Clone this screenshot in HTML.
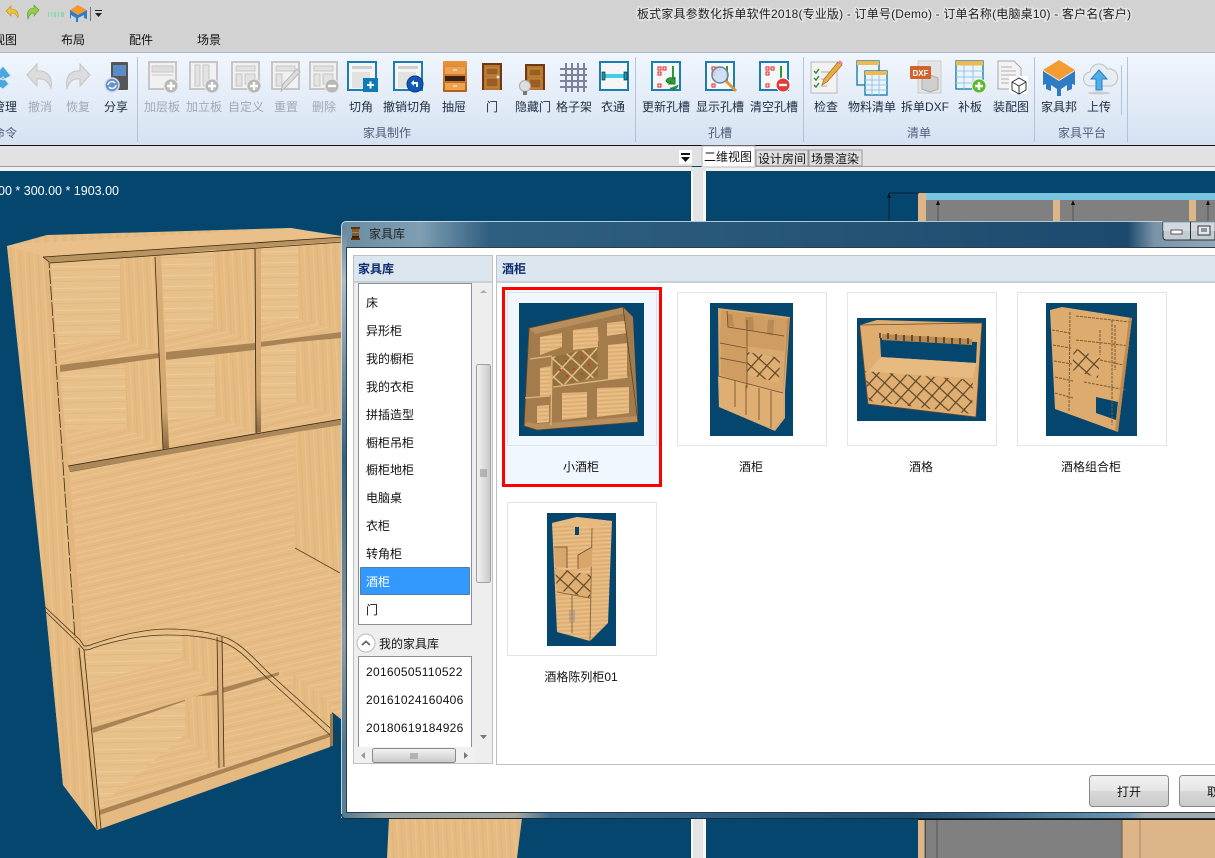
<!DOCTYPE html>
<html lang="zh"><head><meta charset="utf-8"><title>家具库</title>
<style>
html,body{margin:0;padding:0;background:#05466f;width:1215px;height:858px;overflow:hidden}
svg{display:block;position:absolute;left:0;top:0}
text{font-family:"Liberation Sans","Noto Sans CJK SC",sans-serif;font-size:12px;fill:#111}
.c{text-anchor:middle}
.r{fill:#1e2c40}.d{fill:#a0a8b2}.g{fill:#4e5d7c}
.h{font-weight:bold;fill:#0c2a6e}
</style></head><body>
<svg width="1215" height="858" viewBox="0 0 1215 858" xmlns="http://www.w3.org/2000/svg">
<defs>
<pattern id="wh" width="90" height="13" patternUnits="userSpaceOnUse" patternTransform="rotate(-13)">
<rect width="90" height="13" fill="#e6bc84"/><rect y="2" width="90" height="1" fill="#ebc48f"/><rect y="6" width="90" height="1" fill="#e1b57c"/><rect y="10" width="90" height="1" fill="#ebc592"/></pattern>
<pattern id="wb" width="90" height="11" patternUnits="userSpaceOnUse" patternTransform="rotate(-1)">
<rect width="90" height="11" fill="#e8c08a"/><rect y="3" width="90" height="1" fill="#eecb9a"/><rect y="7" width="90" height="1" fill="#e3b880"/></pattern>
<pattern id="wv" width="9" height="60" patternUnits="userSpaceOnUse" patternTransform="rotate(-3)">
<rect width="9" height="60" fill="#e5bb82"/><rect x="2" width="1" height="60" fill="#eac48f"/><rect x="6" width="1" height="60" fill="#e0b47b"/></pattern>
<pattern id="lat" width="13" height="13" patternUnits="userSpaceOnUse" patternTransform="rotate(42)">
<rect width="13" height="13" fill="#94703f"/><rect width="13" height="1.500" fill="#e4bc86"/><rect width="1.500" height="13" fill="#e4bc86"/></pattern>
<pattern id="lat2" width="11" height="11" patternUnits="userSpaceOnUse" patternTransform="rotate(42)">
<rect width="11" height="11" fill="#dfae72"/><rect width="11" height="1.200" fill="#5f4526"/><rect width="1.200" height="11" fill="#5f4526"/></pattern>
<pattern id="tw" width="40" height="4" patternUnits="userSpaceOnUse" patternTransform="rotate(-3)">
<rect width="40" height="4" fill="#e4b67c"/><rect y="1" width="40" height="1" fill="#eac28c"/><rect y="3" width="40" height="1" fill="#dcab70"/></pattern>
<linearGradient id="rib" x1="0" y1="0" x2="0" y2="1"><stop offset="0" stop-color="#f1f6fd"/><stop offset="1" stop-color="#d5e2f2"/></linearGradient>
<linearGradient id="dt" x1="341" y1="0" x2="1215" y2="0" gradientUnits="userSpaceOnUse"><stop offset="0" stop-color="#6a8ba0"/><stop offset=".09" stop-color="#7f9eb3"/><stop offset=".17" stop-color="#2f5f80"/><stop offset=".9" stop-color="#1c4a6e"/><stop offset=".93" stop-color="#7a93a8"/><stop offset="1" stop-color="#94a8b8"/></linearGradient>
<linearGradient id="dl" x1="0" y1="221" x2="0" y2="819" gradientUnits="userSpaceOnUse"><stop offset="0" stop-color="#5f8196"/><stop offset=".1" stop-color="#a9bcc9"/><stop offset=".4" stop-color="#35627f"/><stop offset=".7" stop-color="#8f9a9f"/><stop offset=".88" stop-color="#4f7894"/><stop offset="1" stop-color="#5a7f98"/></linearGradient>
<linearGradient id="db" x1="341" y1="0" x2="1215" y2="0" gradientUnits="userSpaceOnUse"><stop offset="0" stop-color="#4f7894"/><stop offset=".05" stop-color="#9aa3a3"/><stop offset=".2" stop-color="#a8a8a0"/><stop offset=".24" stop-color="#3c6d8f"/><stop offset=".65" stop-color="#1f4f75"/><stop offset=".9" stop-color="#6b95b3"/><stop offset=".92" stop-color="#a3aaae"/><stop offset="1" stop-color="#a3aaae"/></linearGradient>
<linearGradient id="sb" x1="0" y1="0" x2="1" y2="0"><stop offset="0" stop-color="#f4f4f4"/><stop offset="1" stop-color="#c8c8c8"/></linearGradient>
<linearGradient id="sh" x1="0" y1="0" x2="0" y2="1"><stop offset="0" stop-color="#f4f4f4"/><stop offset="1" stop-color="#c8c8c8"/></linearGradient>
<linearGradient id="btn" x1="0" y1="0" x2="0" y2="1"><stop offset="0" stop-color="#f2f2f2"/><stop offset=".49" stop-color="#e6e6e6"/><stop offset=".5" stop-color="#d8d8d8"/><stop offset="1" stop-color="#c9c9c9"/></linearGradient>
<linearGradient id="drw" x1="0" y1="0" x2="0" y2="1"><stop offset="0" stop-color="#e8963c"/><stop offset="1" stop-color="#b0601c"/></linearGradient>
<linearGradient id="dv" x1="0" y1="0" x2="0" y2="1"><stop offset="0" stop-color="#dcb078"/><stop offset=".8" stop-color="#d2a66e"/><stop offset="1" stop-color="#8a6a42"/></linearGradient>
<g id="pG"><rect x="1" y="1" width="27" height="27" fill="#f1f1f1" stroke="#c6c6c6" stroke-width="2"/></g>
<g id="pB"><rect x="1" y="1" width="28" height="28" fill="#f5f5f5" stroke="#1a7fb0" stroke-width="2"/><path d="M5 5h20v3H5z" fill="#cfcfcf"/></g>
<g id="plus"><circle cx="23" cy="25" r="7" fill="#b8b8b8" stroke="#e8e8e8"/><path d="M19 25h8M23 21v8" stroke="#fff" stroke-width="2.4"/></g>
<g id="hole"><rect x="1" y="1" width="28" height="28" fill="#f6f6f6" stroke="#1a7fb0" stroke-width="2"/><path d="M7 6h3v3H7zM12 6h3v3h-3zM7 11h3v3H7zM7 23h3v3H7z" fill="none" stroke="#d22"/><path d="M21 5h2v16h-2z" fill="#2c9a3c"/></g>
</defs>

<!-- window chrome -->
<rect width="1215" height="52" fill="#d2d2d2"/>
<rect y="52" width="1215" height="1" fill="#a9b8cd"/>
<rect y="53" width="1215" height="92" fill="url(#rib)"/>
<rect y="145" width="1215" height="1" fill="#111"/>
<rect y="146" width="1215" height="20" fill="#e2e2e2"/>
<rect y="166" width="692" height="1" fill="#9c9c9c"/>
<rect y="167" width="1215" height="4" fill="#f0f0f0"/>
<rect x="705" y="166" width="510" height="1" fill="#9c9c9c"/>

<!-- quick access -->
<path d="M6 11l5-5v3c5 0 8 3 7 9-1-3-3-5-7-5v3z" fill="#eec23c" stroke="#b89020" stroke-width=".6"/>
<path d="M39 10l-5-5v3c-5 0-8 4-6 11 1-4 3-6 6-6v3z" fill="#93cc48" stroke="#5f9a2a" stroke-width=".6"/>
<path d="M48 12h16v5H48z" fill="#9cd0b4"/><path d="M50 12v5M53 12v5M57 12v5M60 12v5" stroke="#e4e4e4"/>
<path d="M78 5l9 5-9 5-8-5z" fill="#f49a2c"/><path d="M70 10l8 5 9-5v9l-3-1v-3l-6 3v4l-2 0v-4l-5-3v3l-1 1z" fill="#2c7ec6"/>
<rect x="90" y="7" width="1" height="14" fill="#777"/>
<path d="M95 10h7v1h-7zM95 13h7l-3.500 4z" fill="#222"/>
<text x="637" y="18" textLength="494" lengthAdjust="spacing" style="paint-order:stroke;stroke:#e4e4e4;stroke-width:3px;fill:#222">板式家具参数化拆单软件2018(专业版) - 订单号(Demo) - 订单名称(电脑桌10) - 客户名(客户)</text>
<text x="-7" y="44">视图</text><text x="61" y="44">布局</text><text x="129" y="44">配件</text><text x="197" y="44">场景</text>

<!-- ribbon separators -->
<g fill="#b4c4d8"><rect x="137" y="57" width="1" height="85"/><rect x="635" y="57" width="1" height="85"/><rect x="803" y="57" width="1" height="85"/><rect x="1034" y="57" width="1" height="85"/><rect x="1127" y="57" width="1" height="85"/><rect x="1121" y="65" width="1" height="50"/></g>

<!-- ribbon icons -->
<path d="M-6 76L3 66l8 10-8 4zM-6 84l9-7 6 7-6 5z" fill="#4aa8de" stroke="#d8eefa"/>
<g fill="#dcdcdc" stroke="#c4c4c4"><path d="M27 75l10-11v7c10-1 16 6 14 17-3-7-7-10-14-9v7z"/><path d="M90 75L80 64v7c-10-1-15 6-13 17 3-7 6-10 13-9v7z"/></g>
<rect x="111" y="62" width="17" height="28" rx="1" fill="#555"/><rect x="113" y="65" width="13" height="11" fill="#5c8cc8"/><circle cx="112" cy="85" r="7" fill="#6a90cc" stroke="#d0def2" stroke-width="1.500"/><path d="M108 85a4 4 0 0 1 7-2M116 85a4 4 0 0 1-7 2" stroke="#fff" fill="none" stroke-width="1.400"/>

<g transform="translate(148,61)"><use href="#pG"/><path d="M4 5h21v6H4zM4 14h21" fill="#ddd" stroke="#c6c6c6"/><use href="#plus"/></g>
<g transform="translate(189,61)"><use href="#pG"/><path d="M6 4h5v21H6zM14 4h6v21h-6z" fill="#e2e2e2" stroke="#c6c6c6"/><use href="#plus"/></g>
<g transform="translate(231,61)"><use href="#pG"/><path d="M5 5h19v5H5zM5 13h6v12H5zM14 13h10v10H14z" fill="#e2e2e2" stroke="#c6c6c6"/><use href="#plus"/></g>
<g transform="translate(271,61)"><use href="#pG"/><path d="M5 5h19v5H5zM5 13h6v12H5z" fill="#e2e2e2" stroke="#c6c6c6"/><path d="M10 30l2-7 14-15 3 3-14 15z" fill="#ddd" stroke="#b8b8b8"/></g>
<g transform="translate(309,61)"><use href="#pG"/><path d="M5 5h19v5H5zM5 13h6v12H5zM14 13h10v10H14z" fill="#e2e2e2" stroke="#c6c6c6"/><circle cx="23" cy="25" r="7" fill="#b8b8b8" stroke="#e8e8e8"/><path d="M19 25h8" stroke="#fff" stroke-width="2.400"/></g>
<g transform="translate(347,61)"><use href="#pB"/><path d="M5 11h18v16H5z" fill="#e2e2e2"/><rect x="16" y="17" width="15" height="14" fill="#0f7ab8"/><path d="M20 24h7M23.500 20.500v7" stroke="#fff" stroke-width="2"/></g>
<g transform="translate(393,61)"><use href="#pB"/><path d="M5 11h18v16H5z" fill="#e2e2e2"/><circle cx="22" cy="23" r="8" fill="#1058b8" stroke="#0a3a80"/><path d="M18 22l3-3v2h4v5h-2v-3h-2v2z" fill="#fff"/></g>
<g transform="translate(442,61)"><rect x="1" y="0" width="24" height="31" rx="1" fill="url(#drw)"/><rect x="3" y="6" width="20" height="7" fill="#eda350"/><rect x="3" y="15" width="20" height="5" fill="#3a2010"/><rect x="3" y="22" width="20" height="7" fill="#eda350"/><path d="M11 9h4M11 25h4" stroke="#fff"/></g>
<g transform="translate(481,63)"><rect x="1" y="0" width="20" height="27" fill="#6d3a14"/><rect x="3" y="2" width="16" height="25" fill="#b5752e"/><path d="M5 5h12v7H5zM5 15h12v9H5z" fill="#9a5f20" stroke="#c98c46"/><circle cx="17" cy="14" r="1.500" fill="#ddd"/></g>
<g transform="translate(522,64)"><rect x="3" y="0" width="20" height="26" fill="#6d3a14"/><rect x="5" y="2" width="16" height="24" fill="#b5752e"/><path d="M7 5h12v7H7zM7 15h12v9H7z" fill="#9a5f20" stroke="#c98c46"/><circle cx="3" cy="22" r="5.500" fill="#dedede" stroke="#aaa"/><rect x="1" y="27" width="4" height="4" fill="#777"/></g>
<path d="M566 63v29M572 63v29M578 63v29M584 63v29M560 69h27M560 75h27M560 81h27M560 87h27" stroke="#7e809c" stroke-width="2" fill="none"/>
<g transform="translate(599,61)"><rect x="1" y="1" width="28" height="28" fill="#f5f5f5" stroke="#1a7fb0" stroke-width="2"/><rect x="4" y="13" width="22" height="4" fill="#3ed0e8"/><rect x="3" y="11" width="3" height="8" fill="#1a9ab8" stroke="#111" stroke-width=".6"/><rect x="25" y="11" width="3" height="8" fill="#1a9ab8" stroke="#111" stroke-width=".6"/></g>

<g transform="translate(651,61)"><use href="#hole"/><path d="M15 20a5 5 0 0 1 8-2l1-2v7h-6l2-2a3 3 0 0 0-3 1zM27 24a5 5 0 0 1-8 3" fill="#2f9c3c" stroke="#1f7a2c"/></g>
<g transform="translate(705,61)"><use href="#hole"/><circle cx="15" cy="14" r="8" fill="#c8dcf4" fill-opacity=".85" stroke="#6a7f98" stroke-width="1.500"/><path d="M21 20l10 10" stroke="#d89a34" stroke-width="3"/></g>
<g transform="translate(759,61)"><use href="#hole"/><circle cx="24" cy="24" r="7" fill="#e23a3a" stroke="#fff"/><path d="M20 24h8" stroke="#fff" stroke-width="2.400"/></g>

<g transform="translate(811,60)"><rect x="0" y="2" width="26" height="31" fill="#f2f2f2" stroke="#b8b8b8"/><path d="M3 11l2 2 3-4M3 18l2 2 3-4M3 25l2 2 3-4" fill="none" stroke="#2a8a2a" stroke-width="1.400"/><path d="M10 12h12M10 19h8M10 26h6" stroke="#aaa"/><path d="M11 25l2-6 14-17 4 3-15 17z" fill="#f0a840" stroke="#a06a20" stroke-width=".7"/><path d="M27 2l4 3 1-2-3-3z" fill="#e58ab0"/></g>
<g transform="translate(857,61)"><rect x="0" y="0" width="22" height="24" fill="#eaf3fb" stroke="#1a7fb0" stroke-width="1.400"/><rect x="0" y="0" width="22" height="4" fill="#f4b84a"/><rect x="8" y="10" width="22" height="24" fill="#eaf3fb" stroke="#1a7fb0" stroke-width="1.400"/><rect x="8" y="10" width="22" height="4" fill="#f4b84a"/><path d="M8 19h22M8 24h22M8 29h22M15 14v20M22 14v20" stroke="#9cc4e0"/></g>
<g transform="translate(910,61)"><path d="M8 0h23v32H8z" fill="#e4e4e4" stroke="#ccc"/><path d="M12 17l8-3 8 3v11l-8 3-8-3z" fill="#cfcfcf" stroke="#aaa"/><rect x="0" y="5" width="21" height="13" rx="1" fill="#d2622c"/><text x="10.500" y="15" class="c" style="font-size:8px;font-weight:bold;fill:#fff">DXF</text></g>
<g transform="translate(956,61)"><rect x="0" y="0" width="27" height="28" fill="#eaf4fc" stroke="#1a7fb0" stroke-width="1.400"/><rect x="0" y="0" width="27" height="4.500" fill="#f4b84a"/><path d="M0 10h27M0 16h27M0 22h27M8 4v24M17 4v24" stroke="#9cc4e0"/><circle cx="23" cy="25" r="7" fill="#5cb82c" stroke="#e6f2d8"/><path d="M19 25h8M23 21v8" stroke="#fff" stroke-width="2.400"/></g>
<g transform="translate(998,61)"><path d="M0 0h16l7 7v21H0z" fill="#f2f2f2" stroke="#a8a8a8"/><path d="M3 6h11M3 10h15M3 14h15M3 18h8M3 22h8" stroke="#b0b0b0"/><rect x="11" y="15" width="19" height="18" fill="#fff"/><path d="M14 21l7-4 7 4v8l-7 4-7-4zM14 21l7 4 7-4M21 25v8" fill="none" stroke="#333"/></g>

<g transform="translate(1042,60)"><path d="M17 0l16 10-16 10L1 10z" fill="#f49b34"/><path d="M1 11l16 10 16-10v14l-3-1v5l-5 2v-6l-6 4v7h-4v-7l-6-4v6l-5-2v-5l-3 1z" fill="#2e7cc4"/></g>
<g transform="translate(1084,62)"><path d="M7 24a7 7 0 0 1-1-14 9 9 0 0 1 17-3 8 8 0 0 1 4 17z" fill="#e8edf2" stroke="#b8c0c8"/><path d="M15 8l8 9h-5v11h-6V17H7z" fill="#52aee8" stroke="#2a80c0"/><ellipse cx="15" cy="31" rx="11" ry="1.500" fill="#c8ccd2"/></g>

<!-- ribbon labels -->
<text x="-7" y="111" class="r">管理</text>
<text x="40" y="111" class="c d">撤消</text><text x="78" y="111" class="c d">恢复</text><text x="116" y="111" class="c r">分享</text>
<text x="162" y="111" class="c d">加层板</text><text x="204" y="111" class="c d">加立板</text><text x="246" y="111" class="c d">自定义</text><text x="286" y="111" class="c d">重置</text><text x="324" y="111" class="c d">删除</text>
<text x="361" y="111" class="c r">切角</text><text x="407" y="111" class="c r">撤销切角</text><text x="454" y="111" class="c r">抽屉</text><text x="492" y="111" class="c r">门</text><text x="533" y="111" class="c r">隐藏门</text><text x="574" y="111" class="c r">格子架</text><text x="613" y="111" class="c r">衣通</text>
<text x="666" y="111" class="c r">更新孔槽</text><text x="720" y="111" class="c r">显示孔槽</text><text x="774" y="111" class="c r">清空孔槽</text>
<text x="826" y="111" class="c r">检查</text><text x="872" y="111" class="c r">物料清单</text><text x="925" y="111" class="c r">拆单DXF</text><text x="970" y="111" class="c r">补板</text><text x="1011" y="111" class="c r">装配图</text>
<text x="1059" y="111" class="c r">家具邦</text><text x="1099" y="111" class="c r">上传</text>
<text x="-7" y="137" class="g">命令</text><text x="387" y="137" class="c g">家具制作</text><text x="720" y="137" class="c g">孔槽</text><text x="919" y="137" class="c g">清单</text><text x="1082" y="137" class="c g">家具平台</text>

<!-- tab strip -->
<rect x="679" y="150" width="13" height="14" fill="#fff"/><path d="M681 153h9v2h-9zM681 157h9l-4.500 5z" fill="#111"/>
<rect x="702" y="146" width="53" height="21" fill="#fff" stroke="#bbb"/><text x="704" y="161">二维视图</text>
<rect x="756" y="150" width="52" height="16" fill="#dedede" stroke="#999"/><text x="758" y="163">设计房间</text>
<rect x="809" y="150" width="53" height="16" fill="#dedede" stroke="#999"/><text x="811" y="163">场景渲染</text>

<!-- left viewport -->
<rect x="0" y="171" width="691" height="687" fill="#05466f"/>
<rect x="691" y="167" width="15" height="691" fill="#e4e4e4"/>
<rect x="691" y="171" width="2" height="687" fill="#f6f6f6"/>
<rect x="703" y="171" width="3" height="687" fill="#f6f6f6"/>
<text x="119" y="195" text-anchor="end" style="font-size:12.500px;fill:#fff">00 * 300.00 * 1903.00</text>

<!-- 3d cabinet -->
<g stroke-linejoin="round">
<path d="M7 246L47 235 290 228 342 236 340 717 332 712 331 746 97 830 63 785 46 612z" fill="url(#wv)"/>
<path d="M7 246l36 11L77 640 46 607z" fill="url(#wv)"/>
<path d="M46 612l34 33 17 185-34-45z" fill="url(#wv)"/>
<path d="M7 246l9-2 275-16 52 9-296 20z" fill="#e9c08a"/>
<path d="M43 257l300-20v4L50 263z" fill="#b8925f"/>
<path d="M43 257L77 640l6-2L50 263z" fill="#e2b67d"/>
<path d="M43 257l6 5 26 376" fill="none" stroke="#3a2a14" stroke-dasharray="14 2" stroke-width=".8"/>
<!-- cells upper -->
<path d="M51 263l69-5v80l-62 7z" fill="url(#wb)"/><path d="M120 258l35-1 4 96-39-15z" fill="url(#wv)"/><path d="M58 345l62-7 39 15-99 12z" fill="url(#wh)"/><path d="M60 365l99-12v5l-99 14z" fill="#a98355"/>
<path d="M161 255l52-5v78l-48 4z" fill="url(#wb)"/><path d="M213 250l42-1v94l-42-15z" fill="url(#wv)"/><path d="M165 332l48-4 42 15-89 9z" fill="url(#wh)"/><path d="M166 352l89-9v7l-89 10z" fill="#a98355"/>
<path d="M261 248l37-2v74l-37 3z" fill="url(#wb)"/><path d="M298 246l44-3v88l-44-11z" fill="url(#wv)"/><path d="M261 323l34-5 47 13-81 11z" fill="url(#wh)"/><path d="M260 342l82-10v6l-82 9z" fill="#a98355"/>
<path d="M60 372l65-7 2 63-61 9z" fill="url(#wb)"/><path d="M125 365l34-7 4 91-36-21z" fill="url(#wv)"/><path d="M66 430l61-2 36 21-93 16z" fill="url(#wh)"/>
<path d="M166 360l49-5v60l-47 5z" fill="url(#wb)"/><path d="M215 355l40-5 1 83-41-18z" fill="url(#wv)"/><path d="M168 420l47-5 41 18-87 15z" fill="url(#wh)"/>
<path d="M261 347l35-5v59l-35 4z" fill="url(#wb)"/><path d="M296 342l46-4v80l-46-17z" fill="url(#wv)"/><path d="M261 405l35-4 46 17-81 14z" fill="url(#wh)"/>
<path d="M155 257l6-2 8 193-6 1z" fill="url(#dv)"/><path d="M155 257l8 192" stroke="#3a2a14" fill="none" stroke-width=".8"/>
<path d="M255 249l6-1v184l-5 1z" fill="url(#dv)"/><path d="M255 249l1 184" stroke="#2a1c0c" fill="none" stroke-width=".8"/>
<path d="M68 466l274-47v6L70 472z" fill="#ac875a"/><path d="M68 466l274-47" stroke="#33240f" fill="none" stroke-width=".8"/><path d="M70 472l272-46" stroke="#5a4226" fill="none" stroke-width=".8"/>
<path d="M43 257l300-20M50 263l293-21" stroke="#3a2a14" fill="none" stroke-width=".8"/>
<!-- desk -->
<path d="M70 472l226-40v116L82 640z" fill="url(#wh)"/>
<path d="M296 432l46-7v155l-47-32z" fill="url(#wv)"/>
<path d="M82 640l213-92 47 32v140l-59-47-33-30-37-11-46-4-74 15z" fill="url(#wh)"/>
<path d="M295 548l45 25" stroke="#5a4226" fill="none" stroke-width=".8"/>
<!-- lower cabinet -->
<path d="M85 650l8-6 74-16 15 5v25l-94 25z" fill="url(#wb)"/>
<path d="M182 633l35 3v54l-35-32z" fill="url(#wv)"/>
<path d="M88 683l94-25 35 32-125 38z" fill="url(#wh)"/>
<path d="M92 728l125-38v5L93 733z" fill="#a98355"/>
<path d="M93 733l92-32 1 33-86 74z" fill="url(#wb)"/>
<path d="M185 697l32-2 2 73-34-33z" fill="url(#wv)"/>
<path d="M97 808l88-73 34 33-119 42z" fill="url(#wh)"/>
<path d="M222 638l28 5 33 30-61 15z" fill="url(#wh)"/>
<path d="M222 688l57-16v3l-56 18z" fill="#a98355"/>
<path d="M223 693l70-20 38 30v30l-107 34z" fill="url(#wh)"/>
<path d="M293 673l38 30v30l-38-35z" fill="url(#wv)"/>
<path d="M217 637h5l2 130-5 1z" fill="#dcb078"/><path d="M217 637l2 131M222 637l2 130" stroke="#3a2a14" fill="none" stroke-width=".8"/>
<path d="M100 810l230-77v4L100 815z" fill="#a98355"/>
<path d="M100 815l230-78v10L100 829z" fill="#e5ba80"/>
<path d="M80 645l20 184h-4L77 648z" fill="#dcae72"/><path d="M79 648l18 181M84 650l17 179" stroke="#3a2a14" fill="none" stroke-width=".8"/>
<path d="M45 607l35 33 4 6c3 0 5 0 9-2 26-9 54-15 74-15 25 0 49 4 62 10 15 7 27 22 41 35l70 63" fill="none" stroke="#4a3518" stroke-width=".8"/>
<path d="M46 612l33 32 5 6c3 0 5 0 9-2 26-9 54-13 74-13 25 0 47 3 60 9 15 7 25 20 40 34l73 66" fill="none" stroke="#4a3518" stroke-width=".8"/>
<path d="M330 714h3v32h-3z" fill="#9f7a4c"/>
<path d="M389 818h133l-5 40H387z" fill="url(#wv)"/>
</g>

<!-- right viewport -->
<rect x="706" y="171" width="509" height="687" fill="#05466f"/>
<rect x="926" y="193" width="289" height="7" fill="#79c4df"/>
<rect x="926" y="200" width="289" height="24" fill="#808080"/>
<rect x="918" y="193" width="8" height="30" fill="#deb589"/>
<rect x="1053" y="200" width="7" height="24" fill="#deb589"/><rect x="1189" y="200" width="7" height="24" fill="#deb589"/>
<path d="M889 193v30M889 193h30" stroke="#0a2030" fill="none"/>
<path d="M938 203v20M1073 203v20M1208 203v20" stroke="#555"/>
<path d="M936 205l2-5 2 5zM1071 205l2-5 2 5zM1206 205l2-5 2 5zM887 198l2-5 2 5z" fill="#111"/>
<rect x="926" y="819" width="196" height="39" fill="#808080"/>
<rect x="1122" y="819" width="93" height="39" fill="#deb589"/>
<rect x="918" y="819" width="7" height="39" fill="#deb589"/>
<path d="M937 819v39" stroke="#555"/><path d="M1140 819v39" stroke="#a88a64"/><path d="M925 819v39M1122 819v39" stroke="#6a5a44"/>
<rect x="918" y="819" width="297" height="1" fill="#111"/>

<!-- dialog -->
<path d="M341 226a5 5 0 0 1 5-5h869v27H341z" fill="url(#dt)"/>
<rect x="341" y="226" width="6" height="590" fill="url(#dl)"/>
<path d="M341 812h874v7H346a5 5 0 0 1-5-5z" fill="url(#db)"/>
<path d="M341.500 818V226a4.500 4.500 0 0 1 4.500-4.500H1215" fill="none" stroke="#e4ecf0" stroke-opacity=".75"/>
<path d="M341.500 814a4 4 0 0 0 4 4.500H1215" fill="none" stroke="#1a2a34"/>
<rect x="347" y="248" width="868" height="564" fill="#fff"/>
<path d="M346.500 812.500V247.500H1215M346.500 812.500H1215" fill="none" stroke="#2e3e48"/>
<g><rect x="351" y="227" width="9" height="2" fill="#5a3414"/><rect x="352" y="229" width="7" height="3" fill="#8a5a24"/><rect x="352" y="233" width="7" height="3" fill="#8a5a24"/><rect x="352" y="236" width="7" height="2" fill="#3a2008"/><rect x="351" y="238" width="9" height="2" fill="#5a3414"/></g>
<text x="369" y="238" style="fill:#222">家具库</text>
<!-- window controls -->
<path d="M1163 222v15a3 3 0 0 0 3 3h49v-18z" fill="#c3ccd2" stroke="#27333c"/>
<path d="M1163 222h52v9h-52z" fill="#dde3e7" fill-opacity=".6"/>
<rect x="1171" y="230" width="11" height="4" fill="#fff" stroke="#333" stroke-width=".8"/>
<rect x="1190" y="222" width="1" height="18" fill="#27333c"/>
<rect x="1198" y="226" width="12" height="9" fill="#e6e9ec" stroke="#333"/><rect x="1201" y="228" width="6" height="4" fill="#8a96a0"/>

<!-- left column -->
<rect x="353.500" y="255.500" width="139" height="508" fill="#eeeeee" stroke="#c0c0c0"/>
<rect x="354" y="256" width="138" height="25" fill="#dce6ee"/><rect x="354" y="281" width="138" height="2" fill="#c8d0d6"/>
<text x="358" y="273" class="h">家具库</text>
<rect x="358.500" y="283.500" width="113" height="341" fill="#fff" stroke="#8a9098"/>
<g>
<text x="366" y="307">床</text><text x="366" y="335">异形柜</text><text x="366" y="363">我的橱柜</text><text x="366" y="391">我的衣柜</text><text x="366" y="419">拼插造型</text><text x="366" y="447">橱柜吊柜</text><text x="366" y="474">橱柜地柜</text><text x="366" y="502">电脑桌</text><text x="366" y="530">衣柜</text><text x="366" y="558">转角柜</text>
<rect x="360.500" y="567.500" width="109" height="27" fill="#3399ff" stroke="#0b2a55" stroke-dasharray="1 1"/>
<text x="366" y="586" style="fill:#fff">酒柜</text><text x="366" y="614">门</text>
</g>
<circle cx="366" cy="643" r="9" fill="#fff" stroke="#bbb"/><path d="M362 645l4-3.500 4 3.500" fill="none" stroke="#666" stroke-width="1.800"/>
<text x="379" y="648">我的家具库</text>
<rect x="358.500" y="656.500" width="113" height="91" fill="#fff" stroke="#8a9098"/>
<g style="letter-spacing:.3px"><text x="366" y="676">20160505110522</text><text x="366" y="704">20161024160406</text><text x="366" y="732">20180619184926</text></g>
<rect x="473" y="284" width="19" height="463" fill="#eeeeee"/>
<path d="M480 293l3.500-3 3.500 3z" fill="#aaa"/><path d="M480 735h7l-3.500 4z" fill="#777"/>
<rect x="476.500" y="364.500" width="14" height="218" rx="2" fill="url(#sb)" stroke="#a0a0a0"/>
<path d="M480 470h7M480 472h7M480 474h7M480 476h7" stroke="#888"/>
<rect x="354" y="747" width="121" height="16" fill="#f0f0f0"/>
<rect x="372.500" y="748.500" width="83" height="14" rx="2" fill="url(#sh)" stroke="#8a8a8a"/>
<path d="M411 753v6M413 753v6M415 753v6M417 753v6" stroke="#888"/>
<path d="M365 752v7l-4-3.500z" fill="#999"/><path d="M464 752v7l4-3.500z" fill="#777"/>

<!-- right column -->
<path d="M496.500 255.500H1215M496.500 255.500V764.500H1215" fill="none" stroke="#c0c0c0"/>
<rect x="497" y="256" width="718" height="25" fill="#dce6ee"/><rect x="497" y="281" width="718" height="2" fill="#c8d0d6"/>
<text x="502" y="273" class="h">酒柜</text>

<rect x="503.500" y="288.500" width="157" height="197" fill="#f0f7fe" stroke="#f00" stroke-width="3"/>
<rect x="507.500" y="292.500" width="149" height="153" fill="#f0f7fe" stroke="#dfe3e6"/>
<rect x="677.500" y="292.500" width="149" height="153" fill="#fff" stroke="#e4e4e4"/>
<rect x="847.500" y="292.500" width="149" height="153" fill="#fff" stroke="#e4e4e4"/>
<rect x="1017.500" y="292.500" width="149" height="153" fill="#fff" stroke="#e4e4e4"/>
<rect x="507.500" y="502.500" width="149" height="153" fill="#fff" stroke="#e4e4e4"/>
<text x="581" y="471" class="c">小酒柜</text><text x="751" y="471" class="c">酒柜</text><text x="921" y="471" class="c">酒格</text><text x="1091" y="471" class="c">酒格组合柜</text><text x="581" y="681" class="c">酒格陈列柜01</text>

<!-- thumb 1 -->
<rect x="519" y="303" width="125" height="133" fill="#05466f"/>
<path d="M529 328l94-21 10 10 5 105-101 8-13-4z" fill="#a47c4c"/>
<path d="M529 328l94-21 2 6-90 21zM524 426l13 4 101-8-1-6-100 8-10-2z" fill="#b88f5c"/>
<g fill="url(#tw)"><path d="M540 337l22-4v14l-22 8zM573 330l24-3 1 20-25 3zM607 323l18-2 1 12-19 3zM608 345l19-2v34l-19 2zM562 393l25-1v25l-25 3zM597 388l32-1v26l-32 4zM540 368l11-2v29l-11 2zM537 406l12-1v17l-12 1z"/></g>
<path d="M552 357l45-10 1 30-45 10z" fill="url(#lat)"/>
<path d="M529 328l94-21M623 307l15 115-101 8-13-4 5-98" fill="none" stroke="#5e4526" stroke-width=".8"/>
<path d="M530 359l22-3M553 387l75-10M525 398l25-2M597 327l1 14M552 357l-1 68" stroke="#e0b680" fill="none" stroke-width="1.300"/>
<circle cx="566" cy="361" r="1" fill="#e22"/><circle cx="574" cy="369" r="1" fill="#e22"/><circle cx="582" cy="358" r="1" fill="#e22"/><circle cx="589" cy="365" r="1" fill="#e22"/><circle cx="560" cy="370" r="1" fill="#e22"/><circle cx="567" cy="376" r="1" fill="#e22"/><circle cx="582" cy="374" r="1" fill="#e22"/>

<!-- thumb 2 -->
<rect x="710" y="303" width="83" height="133" fill="#05466f"/>
<path d="M718 308l72 9-5 75v26l-10 13-56-24z" fill="#d8a86e"/>
<path d="M721 310l66 9-3 32-64-8zM721 343l26 5v35l-26-8z" fill="#cf9c62"/>
<path d="M727 314h5l2 13-6-2zM745 317h8l1 14-8-2zM768 320h6l-1 16-6-2z" fill="#b98a54"/>
<path d="M747 352l33 6-1 25-32-9z" fill="url(#lat2)"/>
<path d="M718 376l65 17v24l-10 12-54-22z" fill="#dfae72"/>
<path d="M783 393l7-76-3 2-4 74v24z" fill="#c08a50"/>
<path d="M718 376l65 17M727 311l1 16 56 9M747 320v68M735 380v27M746 385v30M759 388v32M771 391v37M720 343l26 5M720 358l26 5" fill="none" stroke="#6a4c2a" stroke-width=".8"/>

<!-- thumb 3 -->
<rect x="857" y="318" width="129" height="103" fill="#05466f"/>
<path d="M860 325l17-5 105 3-6 94-108-13z" fill="#e0ad70"/>
<path d="M880 338l97 4-1 21-95-6z" fill="#05466f"/>
<path d="M881 357l95 6-3 15-105-6z" fill="#e6ba80"/>
<path d="M864 371l109 9-1 34-103-13z" fill="url(#lat2)"/>
<path d="M882 334l90 5v6l-90-5z" fill="#b88a54"/>
<path d="M880 333v5M888 333v6M896 334v6M904 335v6M912 335v6M920 336v6M928 336v6M936 337v6M944 337v6M952 338v6M960 338v6M968 338v6" stroke="#4a3316" stroke-width="1.500"/>
<path d="M860 325l122-2M860 328l8 76 108 13 6-94" fill="none" stroke="#6a4c2a" stroke-width=".8"/>

<!-- thumb 4 -->
<rect x="1046" y="303" width="91" height="133" fill="#05466f"/>
<path d="M1050 310l12-3 70 11-14 114-63-23z" fill="#deab6e"/>
<path d="M1074 348l26 10-2 20-26-8z" fill="url(#lat2)"/>
<path d="M1096 397l22 5-2 18-20-7z" fill="#05466f"/>
<path d="M1070 312l-1 100M1052 330l18 3M1053 345l18 3M1054 361l18 3M1055 377l18 4M1055 393l18 5M1076 316l54 6M1076 340l54 6M1100 360l28 6M1084 382l42 8M1100 330v25M1115 325v45M1112 320v105" fill="none" stroke="#7a5a34" stroke-width="1" stroke-dasharray="3 1"/>
<path d="M1118 432l14-114-3 0-14 113z" fill="#c08a50"/>

<!-- thumb 5 -->
<rect x="547" y="513" width="69" height="133" fill="#05466f"/>
<path d="M552 523l25-6 35 4-4 102-18 18-33-9z" fill="url(#tw)"/>
<path d="M552 523l25-6 35 4-20 7z" fill="#e6ba80"/>
<path d="M592 528l-2 113" stroke="#8a6a40" fill="none"/>
<path d="M575 527h4v8h-4z" fill="#05466f"/>
<path d="M554 547h13v21l-12-2zM578 555l14-8v20l-14 2z" fill="#d8a66b"/>
<path d="M554 547h13v21M578 569v-14l14-8" fill="none" stroke="#6a4c2a" stroke-width=".8"/>
<path d="M555 568l36 7-1 23-33-8z" fill="url(#lat2)"/>
<path d="M557 592l33 6M572 595v38" stroke="#8a6a40" fill="none"/>
<path d="M570 610v12M574 610v12" stroke="#8a8a8a"/>

<!-- buttons -->
<rect x="1089.500" y="775.500" width="79" height="31" rx="3" fill="url(#btn)" stroke="#8a8a8a"/>
<text x="1129" y="796" class="c">打开</text>
<rect x="1179.500" y="775.500" width="79" height="31" rx="3" fill="url(#btn)" stroke="#8a8a8a"/>
<text x="1207" y="796">取消</text>
</svg>
</body></html>
